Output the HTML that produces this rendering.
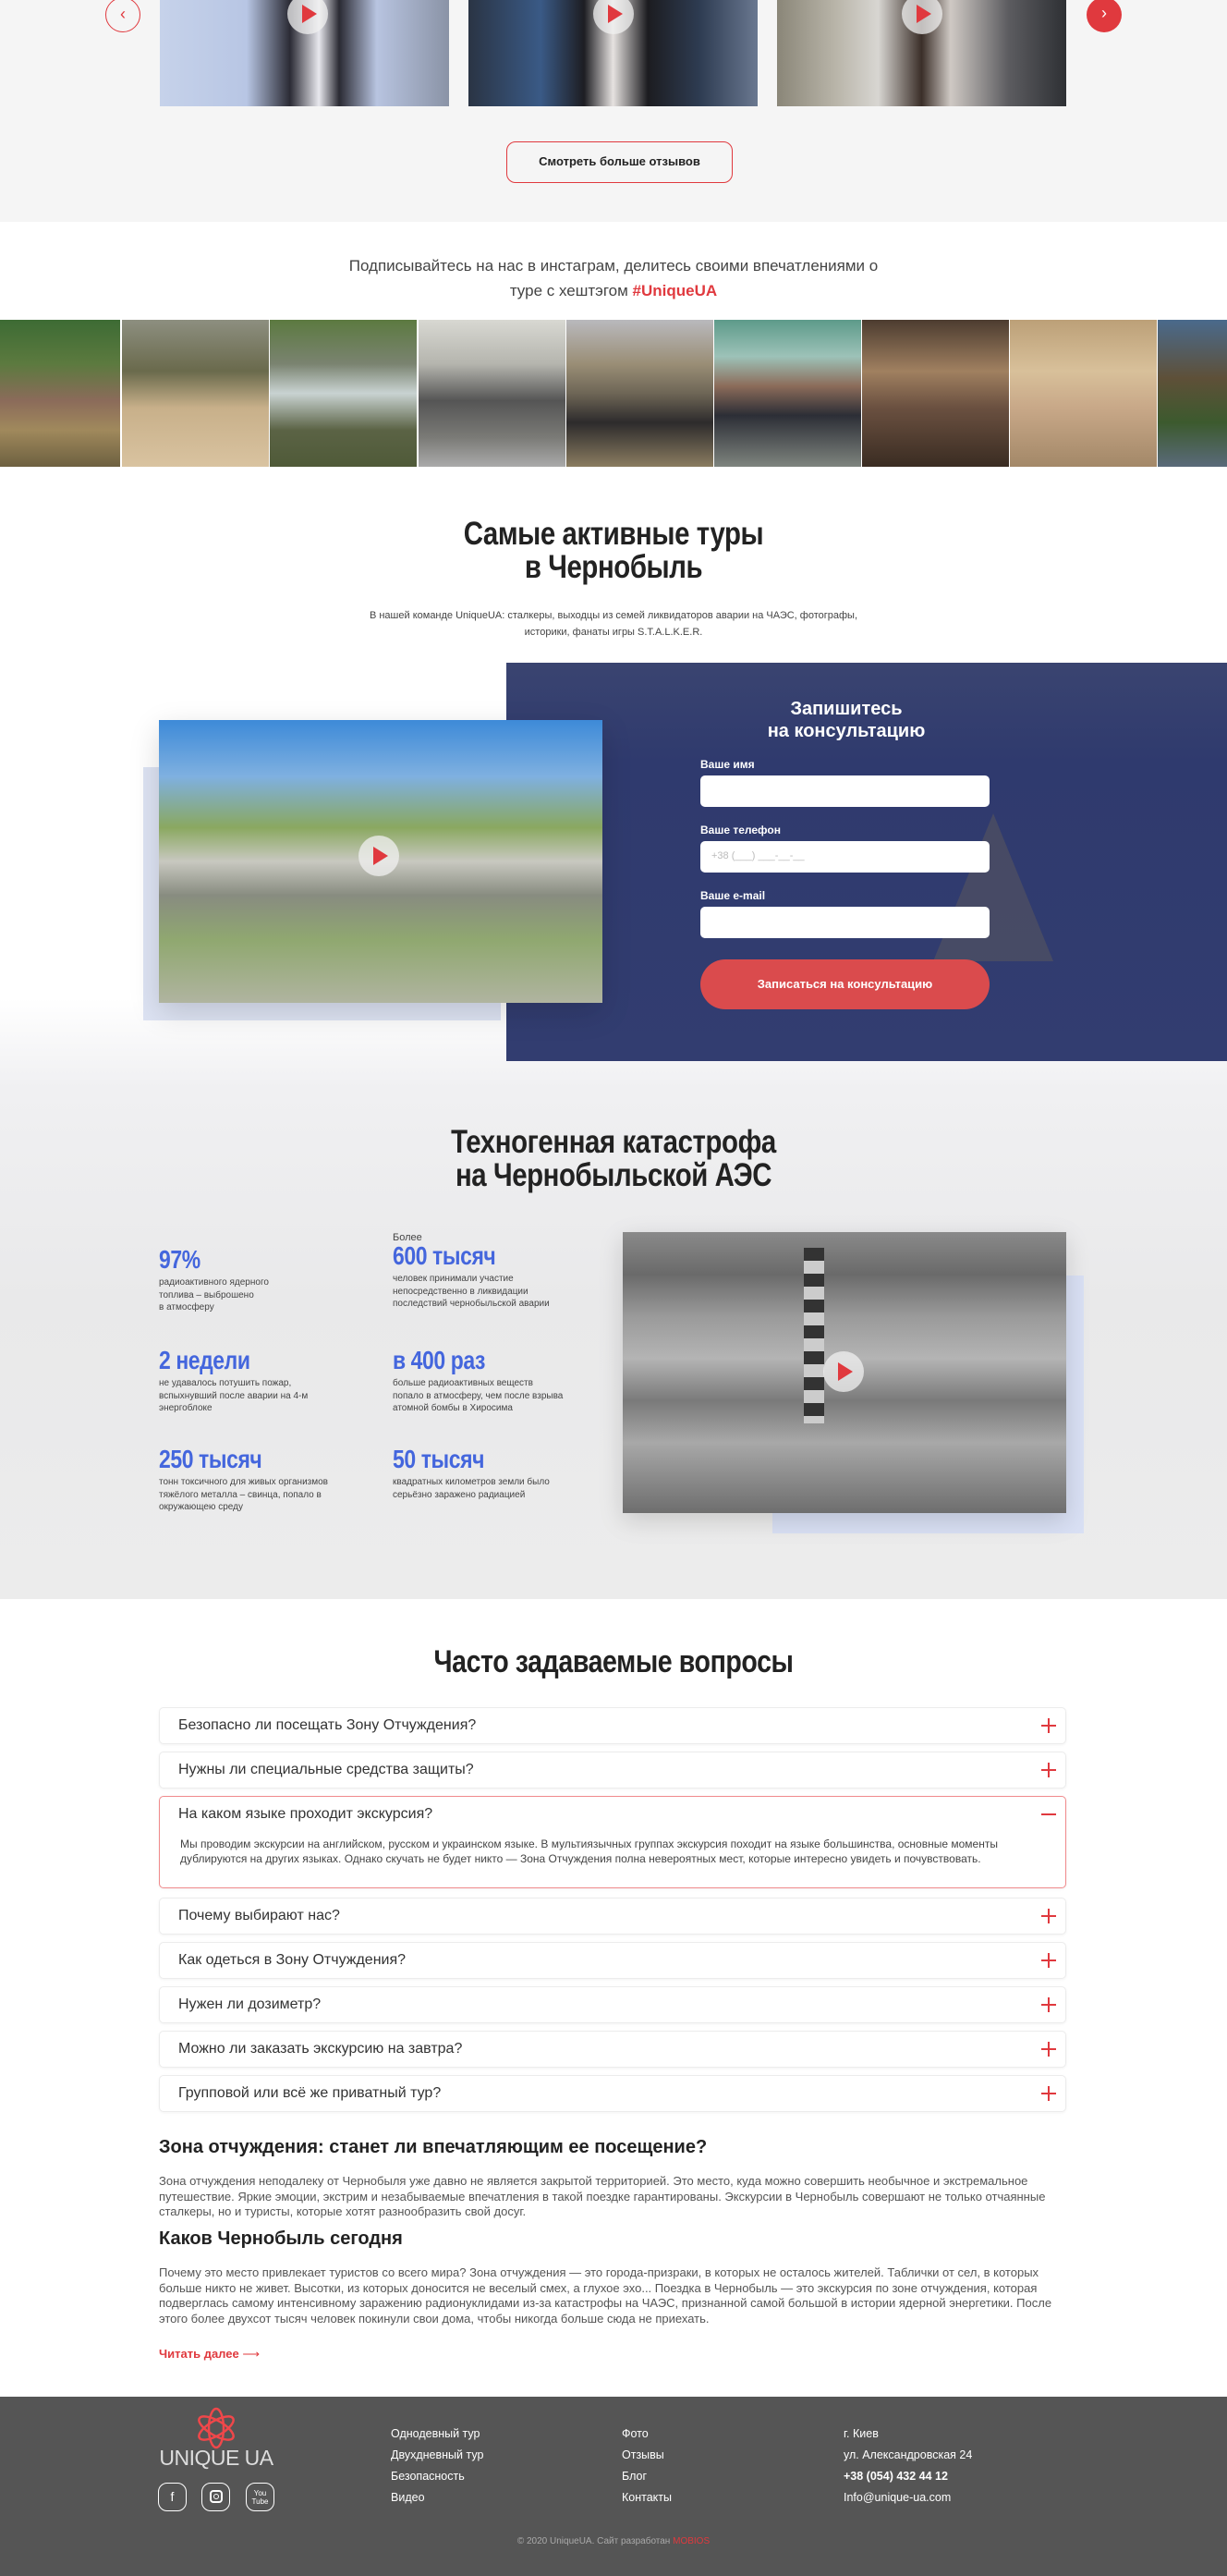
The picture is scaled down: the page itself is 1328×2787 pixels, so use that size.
<!DOCTYPE html>
<html><head><meta charset="utf-8">
<style>
*{margin:0;padding:0;box-sizing:border-box}
body{width:1328px;height:2787px;position:relative;background:#fff;font-family:"Liberation Sans","Noto Sans CJK SC",sans-serif;color:#333;overflow:hidden}
.a{position:absolute}
.cond{font-family:"Liberation Sans",sans-serif;font-weight:bold;letter-spacing:-0.5px}
.h1{left:0;width:1328px;text-align:center;font-size:35px;line-height:36px;color:#222;transform:scaleX(0.84);transform-origin:664px 0}
.play{position:absolute;width:44px;height:44px;border-radius:50%;background:rgba(240,240,240,.75)}
.play:after{content:"";position:absolute;left:16px;top:12px;border-left:16px solid #e0393e;border-top:10px solid transparent;border-bottom:10px solid transparent}
.num{font-size:28px;color:#4466dd;font-weight:bold;transform:scaleX(0.82);transform-origin:0 0;white-space:nowrap;letter-spacing:-0.5px}
.desc{font-size:10px;line-height:13.5px;color:#444}
.q{left:172px;width:982px;height:40px;border:1px solid #ececec;border-radius:5px;background:#fff;box-shadow:0 1px 3px rgba(0,0,0,.05)}
.q span{position:absolute;left:20px;top:10px;font-size:16px;color:#333}
.q i{position:absolute;right:10px;top:11px;width:16px;height:16px}
.q i:before{content:"";position:absolute;left:0;top:7px;width:16px;height:2px;background:#e0393e}
.q i:after{content:"";position:absolute;left:7px;top:0;width:2px;height:16px;background:#e0393e}
.q i.m:after{display:none}
.p{font-size:13px;line-height:16.5px;color:#555}
.fl{font-size:12.5px;color:#fff}
.soc{position:absolute;top:2686px;width:31px;height:31px;border:1.5px solid #fff;border-radius:10px;color:#fff;text-align:center;font-size:14px;line-height:28px}
</style></head><body>

<!-- reviews -->
<div class="a" style="left:0;top:0;width:1328px;height:240px;background:#f5f5f5"></div>
<div class="a" style="left:114px;top:-3px;width:38px;height:38px;border:1px solid #e0393e;border-radius:50%;color:#e0393e;text-align:center;line-height:34px;font-size:18px">&#8249;</div>
<div class="a" style="left:1176px;top:-3px;width:38px;height:38px;background:#e0393e;border-radius:50%;color:#fff;text-align:center;line-height:34px;font-size:18px">&#8250;</div>
<div class="a" style="left:173px;top:0;width:313px;height:115px;background:linear-gradient(90deg,#c6d2ea 0%,#b8c6e4 30%,#2b2b35 45%,#e8e8ee 55%,#2a2a33 62%,#b8c4e0 75%,#8a93a6 100%)"></div>
<div class="a" style="left:507px;top:0;width:313px;height:115px;background:linear-gradient(90deg,#2a3444 0%,#3a5a86 25%,#1d1d22 40%,#e6e2e0 50%,#1c1c20 62%,#2e3c52 80%,#6a7890 100%)"></div>
<div class="a" style="left:841px;top:0;width:313px;height:115px;background:linear-gradient(90deg,#8a8678 0%,#b8b4a8 20%,#d8d6d2 35%,#3a2e28 50%,#cfc9c4 60%,#5c5c60 80%,#2e3034 100%)"></div>
<div class="play" style="left:311px;top:-7px"></div>
<div class="play" style="left:642px;top:-7px"></div>
<div class="play" style="left:976px;top:-7px"></div>
<div class="a" style="left:548px;top:153px;width:245px;height:45px;border:1.5px solid #e0393e;border-radius:10px;text-align:center;line-height:42px;font-size:13px;font-weight:bold;color:#222">Смотреть больше отзывов</div>

<!-- instagram -->
<div class="a" style="left:0;top:274px;width:1328px;text-align:center;font-size:17px;line-height:27px;color:#444">Подписывайтесь на нас в инстаграм, делитесь своими впечатлениями о<br>туре с хештэгом <b style="color:#e0393e">#UniqueUA</b></div>
<div class="a" style="left:0;top:346px;width:130px;height:159px;background:linear-gradient(180deg,#3d6b34 0%,#5c7a3f 30%,#8b6b5a 55%,#a0895c 75%,#6d6040 100%)"></div>
<div class="a" style="left:132px;top:346px;width:159px;height:159px;background:linear-gradient(180deg,#8d8f80 0%,#6a6a4c 35%,#c8b08a 60%,#d9c3a0 100%)"></div>
<div class="a" style="left:292px;top:346px;width:159px;height:159px;background:linear-gradient(180deg,#5c7a40 0%,#7a8370 30%,#c9d3d2 50%,#5b6345 75%,#4f5a38 100%)"></div>
<div class="a" style="left:453px;top:346px;width:159px;height:159px;background:linear-gradient(180deg,#d8d8d2 0%,#b5b5ae 30%,#555 55%,#7a7a76 80%,#aaa 100%)"></div>
<div class="a" style="left:613px;top:346px;width:159px;height:159px;background:linear-gradient(180deg,#b9b9bd 0%,#9a8e76 30%,#6e6656 50%,#2d2b2c 70%,#8a7c60 100%)"></div>
<div class="a" style="left:773px;top:346px;width:159px;height:159px;background:linear-gradient(180deg,#5d9a8a 0%,#9dc2b8 25%,#8c6c5a 45%,#2c2e36 65%,#7e847e 100%)"></div>
<div class="a" style="left:933px;top:346px;width:159px;height:159px;background:linear-gradient(180deg,#4c3c30 0%,#a08060 35%,#6a5040 60%,#3a2c22 100%)"></div>
<div class="a" style="left:1093px;top:346px;width:159px;height:159px;background:linear-gradient(180deg,#bca078 0%,#d8c09a 35%,#c8a888 60%,#a38868 100%)"></div>
<div class="a" style="left:1253px;top:346px;width:75px;height:159px;background:linear-gradient(180deg,#4a6a8c 0%,#5e5038 40%,#3c5a2e 70%,#5a6a7a 100%)"></div>

<!-- tours -->
<div class="a cond h1" style="top:560px">Самые активные туры<br>в Чернобыль</div>
<div class="a" style="left:0;top:657px;width:1328px;text-align:center;font-size:11px;line-height:18px;color:#444">В нашей команде UniqueUA: сталкеры, выходцы из семей ликвидаторов аварии на ЧАЭС, фотографы,<br>историки, фанаты игры S.T.A.L.K.E.R.</div>

<div class="a" style="left:0;top:1080px;width:1328px;height:650px;background:linear-gradient(180deg,#fff 0%,#f0f0f2 15%,#e9e9ea 50%,#ececec 100%)"></div>
<div class="a" style="left:548px;top:717px;width:780px;height:431px;background:linear-gradient(180deg,#3a4470 0%,#2f3a6e 25%,#323d70 100%)"></div>
<div class="a" style="left:1010px;top:880px;width:130px;height:160px;background:rgba(140,120,70,.25);clip-path:polygon(50% 0,100% 100%,0 100%)"></div>
<div class="a" style="left:155px;top:830px;width:387px;height:274px;background:#dde3f3"></div>
<div class="a" style="left:172px;top:779px;width:480px;height:306px;background:linear-gradient(180deg,#3d8ad8 0%,#7fb0e0 20%,#8aa860 38%,#c8c8c0 50%,#888c80 62%,#90a870 78%,#b0b4a0 100%);box-shadow:0 10px 30px rgba(0,0,0,.15)"></div>
<div class="play" style="left:388px;top:904px"></div>
<div class="a" style="left:548px;top:755px;width:736px;text-align:center;font-size:20px;line-height:24px;font-weight:bold;color:#fff">Запишитесь<br>на консультацию</div>
<div class="a" style="left:758px;top:820px;font-size:12px;font-weight:bold;color:#fff">Ваше имя</div>
<div class="a" style="left:758px;top:839px;width:313px;height:34px;background:#fff;border-radius:5px"></div>
<div class="a" style="left:758px;top:891px;font-size:12px;font-weight:bold;color:#fff">Ваше телефон</div>
<div class="a" style="left:758px;top:910px;width:313px;height:34px;background:#fff;border-radius:5px;font-size:11px;color:#bbb;padding:10px 12px">+38 (___) ___-__-__</div>
<div class="a" style="left:758px;top:962px;font-size:12px;font-weight:bold;color:#fff">Ваше e-mail</div>
<div class="a" style="left:758px;top:981px;width:313px;height:34px;background:#fff;border-radius:5px"></div>
<div class="a" style="left:758px;top:1038px;width:313px;height:54px;background:#da4b4d;border-radius:27px;color:#fff;font-size:13px;font-weight:bold;text-align:center;line-height:54px">Записаться на консультацию</div>

<!-- catastrophe -->
<div class="a cond h1" style="top:1218px">Техногенная катастрофа<br>на Чернобыльской АЭС</div>
<div class="a" style="left:172px;top:1347px"><div class="num">97%</div><div class="desc" style="margin-top:2px">радиоактивного ядерного<br>топлива – выброшено<br>в атмосферу</div></div>
<div class="a" style="left:425px;top:1333px"><div style="font-size:11px;color:#444">Более</div><div class="num" style="margin-top:-2px">600 тысяч</div><div class="desc" style="margin-top:2px">человек принимали участие<br>непосредственно в ликвидации<br>последствий чернобыльской аварии</div></div>
<div class="a" style="left:172px;top:1456px"><div class="num">2 недели</div><div class="desc" style="margin-top:2px">не удавалось потушить пожар,<br>вспыхнувший после аварии на 4-м<br>энергоблоке</div></div>
<div class="a" style="left:425px;top:1456px"><div class="num">в 400 раз</div><div class="desc" style="margin-top:2px">больше радиоактивных веществ<br>попало в атмосферу, чем после взрыва<br>атомной бомбы в Хиросима</div></div>
<div class="a" style="left:172px;top:1563px"><div class="num">250 тысяч</div><div class="desc" style="margin-top:2px">тонн токсичного для живых организмов<br>тяжёлого металла – свинца, попало в<br>окружающею среду</div></div>
<div class="a" style="left:425px;top:1563px"><div class="num">50 тысяч</div><div class="desc" style="margin-top:2px">квадратных километров земли было<br>серьёзно заражено радиацией</div></div>
<div class="a" style="left:836px;top:1380px;width:337px;height:279px;background:#d9e0f4"></div>
<div class="a" style="left:674px;top:1333px;width:480px;height:304px;background:linear-gradient(180deg,#8a8a8a 0%,#6a6a6a 15%,#9a9a9a 30%,#b4b4b4 45%,#7a7a7a 60%,#a8a8a8 75%,#6e6e6e 100%);box-shadow:0 8px 25px rgba(0,0,0,.15)"></div>
<div class="a" style="left:870px;top:1350px;width:22px;height:190px;background:repeating-linear-gradient(180deg,#333 0 14px,#ccc 14px 28px)"></div>
<div class="play" style="left:891px;top:1462px"></div>

<!-- FAQ -->
<div class="a cond h1" style="top:1780px;font-size:34px">Часто задаваемые вопросы</div>
<div class="a q" style="top:1847px"><span>Безопасно ли посещать Зону Отчуждения?</span><i></i></div>
<div class="a q" style="top:1895px"><span>Нужны ли специальные средства защиты?</span><i></i></div>
<div class="a q" style="top:1943px;height:100px;border-color:#f08a8c"><span>На каком языке проходит экскурсия?</span><i class="m"></i>
<div class="a" style="left:22px;top:43px;width:900px;font-size:12px;line-height:16px;color:#444">Мы проводим экскурсии на английском, русском и украинском языке. В мультиязычных группах экскурсия походит на языке большинства, основные моменты дублируются на других языках. Однако скучать не будет никто — Зона Отчуждения полна невероятных мест, которые интересно увидеть и почувствовать.</div></div>
<div class="a q" style="top:2053px"><span>Почему выбирают нас?</span><i></i></div>
<div class="a q" style="top:2101px"><span>Как одеться в Зону Отчуждения?</span><i></i></div>
<div class="a q" style="top:2149px"><span>Нужен ли дозиметр?</span><i></i></div>
<div class="a q" style="top:2197px"><span>Можно ли заказать экскурсию на завтра?</span><i></i></div>
<div class="a q" style="top:2245px"><span>Групповой или всё же приватный тур?</span><i></i></div>

<!-- text -->
<div class="a" style="left:172px;top:2312px;font-size:20px;font-weight:bold;color:#222">Зона отчуждения: станет ли впечатляющим ее посещение?</div>
<div class="a p" style="left:172px;top:2352px;width:960px">Зона отчуждения неподалеку от Чернобыля уже давно не является закрытой территорией. Это место, куда можно совершить необычное и экстремальное путешествие. Яркие эмоции, экстрим и незабываемые впечатления в такой поездке гарантированы. Экскурсии в Чернобыль совершают не только отчаянные сталкеры, но и туристы, которые хотят разнообразить свой досуг.</div>
<div class="a" style="left:172px;top:2411px;font-size:20px;font-weight:bold;color:#222">Каков Чернобыль сегодня</div>
<div class="a p" style="left:172px;top:2451px;width:985px">Почему это место привлекает туристов со всего мира? Зона отчуждения — это города-призраки, в которых не осталось жителей. Таблички от сел, в которых больше никто не живет. Высотки, из которых доносится не веселый смех, а глухое эхо... Поездка в Чернобыль — это экскурсия по зоне отчуждения, которая подверглась самому интенсивному заражению радионуклидами из-за катастрофы на ЧАЭС, признанной самой большой в истории ядерной энергетики. После этого более двухсот тысяч человек покинули свои дома, чтобы никогда больше сюда не приехать.</div>
<div class="a" style="left:172px;top:2539px;font-size:13px;font-weight:bold;color:#e0393e">Читать далее <span style="font-weight:normal">⟶</span></div>

<!-- footer -->
<div class="a" style="left:0;top:2593px;width:1328px;height:194px;background:#555"></div>
<svg class="a" style="left:210px;top:2603px" width="48" height="48" viewBox="0 0 48 48" fill="none" stroke="#f0474a" stroke-width="2.5">
<ellipse cx="24" cy="24" rx="21" ry="8" transform="rotate(30 24 24)"/><ellipse cx="24" cy="24" rx="21" ry="8" transform="rotate(-30 24 24)"/><ellipse cx="24" cy="24" rx="21" ry="8" transform="rotate(90 24 24)"/></svg>
<div class="a" style="left:170px;top:2646px;width:128px;text-align:center;font-size:23px;color:#ddd;font-weight:200;letter-spacing:-0.5px">UNIQUE UA</div>
<div class="soc" style="left:171px">f</div>
<div class="soc" style="left:218px"><div style="width:14px;height:14px;border:2px solid #fff;border-radius:4px;margin:7px auto;position:relative"><div style="width:6px;height:6px;border:1.5px solid #fff;border-radius:50%;position:absolute;left:2px;top:2px"></div></div></div>
<div class="soc" style="left:266px;font-size:8px;line-height:9px;padding-top:6px">You<br>Tube</div>
<div class="a fl" style="left:423px;top:2622px;line-height:23px">Однодевный тур<br>Двухдневный тур<br>Безопасность<br>Видео</div>
<div class="a fl" style="left:673px;top:2622px;line-height:23px">Фото<br>Отзывы<br>Блог<br>Контакты</div>
<div class="a fl" style="left:913px;top:2622px;line-height:23px">г. Киев<br>ул. Александровская 24<br><b>+38 (054) 432 44 12</b><br>Info@unique-ua.com</div>
<div class="a" style="left:0;top:2744px;width:1328px;text-align:center;font-size:10px;color:#aaa">© 2020 UniqueUA. Сайт разработан <span style="color:#e0393e">MOBIOS</span></div>
</body></html>
